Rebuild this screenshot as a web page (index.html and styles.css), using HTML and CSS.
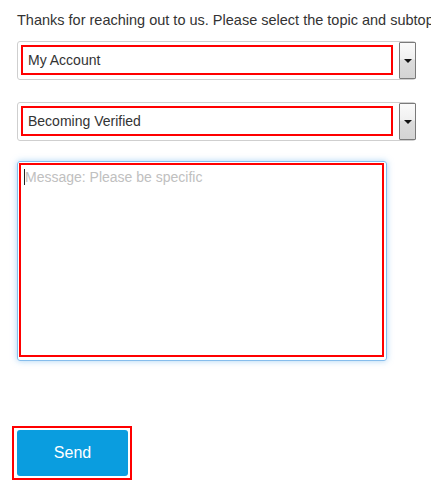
FILE: index.html
```html
<!DOCTYPE html>
<html>
<head>
<meta charset="utf-8">
<link rel="stylesheet" href="styles.css">
</head>
<body>
<div class="page">
  <p class="intro">Thanks for reaching out to us. Please select the topic and subtopic that best describes your request.</p>
  <div class="select-box">
    <div class="field">My Account</div>
    <div class="arrow-btn"><span class="tri"></span></div>
  </div>
  <div class="select-box second">
    <div class="field">Becoming Verified</div>
    <div class="arrow-btn"><span class="tri"></span></div>
  </div>
  <div class="textarea-box">
    <div class="textarea-field"><span class="caret"></span><span class="placeholder">Message: Please be specific</span></div>
  </div>
  <div class="send-wrap">
    <button class="send">Send</button>
  </div>
</div>
</body>
</html>
```

FILE: styles.css
```css
html, body {
  margin: 0;
  padding: 0;
  background: #fff;
  overflow: hidden;
}
.page {
  width: 431px;
  height: 486px;
  overflow: hidden;
  font-family: "Liberation Sans", Arial, sans-serif;
  color: #333;
  padding-left: 17px;
  box-sizing: border-box;
}
.intro {
  margin: 0;
  padding-top: 11px;
  font-size: 14.5px;
  line-height: 18px;
  white-space: nowrap;
  color: #333;
}
.select-box {
  margin-top: 12px;
  width: 399px;
  height: 39px;
  box-sizing: border-box;
  border: 1px solid #cfcfcf;
  border-radius: 3px;
  display: flex;
  align-items: stretch;
  padding: 3px 0 0 3px;
}
.select-box.second {
  margin-top: 22px;
}
.field {
  width: 372px;
  height: 30px;
  box-sizing: border-box;
  border: 2px solid #ff0000;
  font-size: 14px;
  line-height: 26px;
  padding-left: 5px;
  color: #333;
}
.arrow-btn {
  margin-left: auto;
  margin-top: -3px;
  margin-right: -1px;
  width: 17px;
  height: 37px;
  box-sizing: border-box;
  border: 1px solid #7a7a7a;
  border-radius: 1px;
  background: linear-gradient(#fafafa 0%, #f0f0f0 45%, #dcdcdc 50%, #d4d4d4 100%);
  display: flex;
  align-items: center;
  justify-content: center;
}
.tri {
  width: 0;
  height: 0;
  border-left: 4px solid transparent;
  border-right: 4px solid transparent;
  border-top: 4px solid #111;
}
.textarea-box {
  margin-top: 20px;
  width: 370px;
  height: 200px;
  box-sizing: border-box;
  border: 1px solid #86bdec;
  border-radius: 3px;
  box-shadow: 0 0 6px rgba(102, 175, 233, 0.55);
  padding: 1px 2px 3px 1px;
}
.textarea-field {
  width: 100%;
  height: 100%;
  box-sizing: border-box;
  border: 2px solid #ff0000;
  padding: 4px 0 0 3px;
  font-size: 14px;
  line-height: 16px;
  display: flex;
  align-items: flex-start;
}
.caret {
  width: 1px;
  height: 16px;
  background: #222;
}
.placeholder {
  color: #c0c0c0;
}
.send-wrap {
  margin-top: 65px;
  margin-left: -5px;
  width: 120px;
  height: 54px;
  box-sizing: border-box;
  border: 2px solid #ff0000;
  padding: 2px 0 0 3px;
}
.send {
  width: 111px;
  height: 46px;
  border: none;
  border-radius: 3px;
  background: #0a9ddf;
  color: #fff;
  font-family: "Liberation Sans", Arial, sans-serif;
  font-size: 16px;
  padding: 0;
  margin: 0;
  display: block;
}
```
